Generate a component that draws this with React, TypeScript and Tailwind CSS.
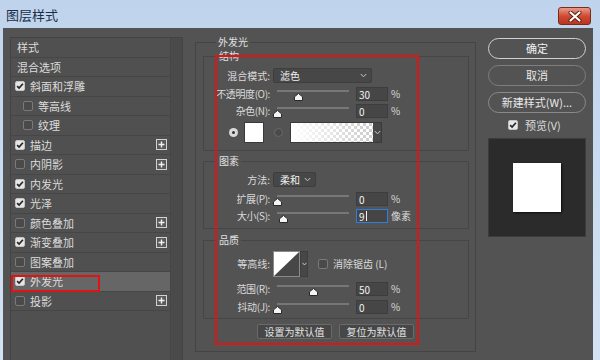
import React from "react";

function Check({ checked }: { checked: boolean }) {
  return checked ? (
    <span className="flex h-[10px] w-[10px] shrink-0 items-center justify-center rounded-[2px] border border-[#c4c4c4] bg-[#e6e6e6]">
      <svg width="8" height="8" viewBox="0 0 8 8">
        <path d="M1.1 4.1 L3.1 6 L6.9 1.7" fill="none" stroke="#262626" strokeWidth="1.7" />
      </svg>
    </span>
  ) : (
    <span className="block h-[10px] w-[10px] shrink-0 rounded-[2px] border border-[#7a7a7a] bg-[#4a4a4a]" />
  );
}

function Plus() {
  return (
    <span className="ml-auto mr-[3px] flex h-[11px] w-[11px] items-center justify-center border border-[#d2d2d2] bg-[#5a5a5a]">
      <svg width="7" height="7" viewBox="0 0 7 7">
        <path d="M3.5 0.5V6.5M0.5 3.5H6.5" stroke="#f2f2f2" strokeWidth="1.4" />
      </svg>
    </span>
  );
}

function Chevron() {
  return (
    <svg width="7" height="5" viewBox="0 0 7 5">
      <path d="M0.8 1 L3.5 3.8 L6.2 1" fill="none" stroke="#c8c8c8" strokeWidth="1" />
    </svg>
  );
}

type Row = { label: string; check?: boolean; indent?: boolean; plus?: boolean; selected?: boolean };

const rows: Row[] = [
  { label: "样式" },
  { label: "混合选项" },
  { label: "斜面和浮雕", check: true },
  { label: "等高线", check: false, indent: true },
  { label: "纹理", check: false, indent: true },
  { label: "描边", check: true, plus: true },
  { label: "内阴影", check: false, plus: true },
  { label: "内发光", check: true },
  { label: "光泽", check: true },
  { label: "颜色叠加", check: false, plus: true },
  { label: "渐变叠加", check: true, plus: true },
  { label: "图案叠加", check: false },
  { label: "外发光", check: true, selected: true },
  { label: "投影", check: false, plus: true },
];

function Slider({ pos }: { pos: number }) {
  return (
    <div className="relative ml-[7px] h-[14px] w-[72px] shrink-0">
      <div className="mt-[3px] h-[2px] w-full bg-[#777777]" />
      <svg className="absolute top-[6px]" style={{ left: pos - 4.5 }} width="9" height="8" viewBox="0 0 9 8">
        <path d="M4.5 0.5 L8.5 3.8 V7.5 H0.5 V3.8 Z" fill="#f4f4f4" stroke="#2a2a2a" strokeWidth="1" />
      </svg>
    </div>
  );
}

function Field({ value, active }: { value: string; active?: boolean }) {
  return (
    <div
      className={
        active
          ? "ml-[7px] flex h-[14px] w-[32px] shrink-0 items-center border border-[#2d7fe0] bg-[#454545] pl-[2px] text-[10px] text-[#f2f2f2]"
          : "ml-[7px] flex h-[14px] w-[32px] shrink-0 items-center border border-[#3d3d3d] bg-[#464646] pl-[2px] text-[10px] text-[#f2f2f2]"
      }
    >
      {value}
      {active && <span className="ml-[1px] h-[10px] w-[1px] bg-[#f2f2f2]" />}
    </div>
  );
}

function SliderRow({ label, pos, value, unit, active }: { label: string; pos: number; value: string; unit: string; active?: boolean }) {
  return (
    <div className="flex h-[14px] items-center">
      <div className="w-[66px] shrink-0 whitespace-nowrap text-right text-[10px] leading-[14px] tracking-[-0.4px] text-[#dadada]">{label}</div>
      <Slider pos={pos} />
      <Field value={value} active={active} />
      <span className="ml-[3px] text-[10px] leading-[14px] text-[#dadada]">{unit}</span>
    </div>
  );
}

function Legend({ children }: { children: React.ReactNode }) {
  return <legend className="ml-[13px] px-[2px] text-[10px] leading-[14px] text-[#e0e0e0]">{children}</legend>;
}

export default function App() {
  return (
    <div className="flex h-[360px] w-[600px] flex-col overflow-hidden bg-gradient-to-b from-[#bfd4ec] to-[#d4e3f4] font-['Noto_Sans_CJK_SC','Noto_Sans',sans-serif]">
      {/* title bar */}
      <div className="flex h-[28px] shrink-0 items-start justify-between pl-[6px] pr-[9px]">
        <span className="mt-[6px] text-[13px] leading-[18px] text-[#1c2f4a]">图层样式</span>
        <div className="mt-[7px] flex h-[18px] w-[33px] items-center justify-center rounded-[3px] border border-[#7d2a1c] bg-gradient-to-b from-[#e59a88] via-[#cf4b33] to-[#b8361f]">
          <svg width="14" height="11" viewBox="0 0 14 11">
            <path d="M2.5 1.5 L11.5 9.5 M11.5 1.5 L2.5 9.5" stroke="#5a1a10" strokeWidth="4" strokeLinecap="round" />
            <path d="M2.5 1.5 L11.5 9.5 M11.5 1.5 L2.5 9.5" stroke="#ffffff" strokeWidth="2.2" strokeLinecap="round" />
          </svg>
        </div>
      </div>

      {/* body */}
      <div className="relative ml-[3px] mr-[7px] flex flex-1 bg-[#535353] pl-[7px]">
        {/* left list */}
        <div className="mt-[9px] flex h-[324px] w-[173px] shrink-0 border border-[#434343] bg-[#505050]">
          <div className="relative w-[159px]">
            {rows.map((r, i) => (
              <div
                key={i}
                className={
                  r.selected
                    ? "flex h-[19.5px] items-center border-b border-[#464646] bg-[#666666]"
                    : "flex h-[19.5px] items-center border-b border-[#464646]"
                }
              >
                {r.check === undefined ? (
                  <span className="pl-[6px] text-[11px] leading-[14px] text-[#dcdcdc]">{r.label}</span>
                ) : (
                  <>
                    <span className={r.indent ? "flex pl-[12px]" : "flex pl-[4px]"}>
                      <Check checked={r.check} />
                    </span>
                    <span className="ml-[5px] text-[11px] leading-[14px] text-[#dcdcdc]">{r.label}</span>
                    {r.plus && <Plus />}
                  </>
                )}
              </div>
            ))}
            <div className="pointer-events-none absolute left-[0px] top-[237px] h-[17px] w-[89px] border-2 border-[#e01414]" />
          </div>
          <div className="w-[12px] border-l border-[#464646] bg-[#4a4a4a]" />
        </div>

        {/* middle */}
        <div className="ml-[12px] mt-[7px] w-[281px] shrink-0">
          <fieldset className="border border-[#444444] pb-[12px] pl-[7px] pr-[6px]">
            <Legend>外发光</Legend>
            {/* 结构 */}
            <fieldset className="border border-[#464646] pb-[7px]">
              <Legend>结构</Legend>
              <div className="mt-[5px] flex h-[15px] items-center">
                <div className="w-[66px] shrink-0 text-right text-[10px] leading-[14px] text-[#dadada]">混合模式:</div>
                <div className="ml-[3px] flex h-[15px] w-[99px] items-center justify-between rounded-[2px] border border-[#3e3e3e] bg-[#474747] pl-[6px] pr-[4px] text-[10px] text-[#f0f0f0]">
                  滤色
                  <Chevron />
                </div>
              </div>
              <div className="mt-[4px] flex flex-col gap-[3px]">
                <SliderRow label="不透明度(O):" pos={21.6} value="30" unit="%" />
                <SliderRow label="杂色(N):" pos={0} value="0" unit="%" />
              </div>
              <div className="mt-[4px] flex h-[21px] items-center pl-[25px]">
                <span className="flex h-[9px] w-[9px] items-center justify-center rounded-full bg-[#dadada]">
                  <span className="block h-[3px] w-[3px] rounded-full bg-[#333333]" />
                </span>
                <div className="ml-[6px] h-[21px] w-[20px] border border-[#3a3a3a] bg-white" />
                <span className="ml-[10px] block h-[9px] w-[9px] rounded-full border border-[#6a6a6a] bg-[#4a4a4a]" />
                <div className="ml-[7px] flex h-[21px] w-[92px] border border-[#3a3a3a]">
                  <svg width="82" height="19" viewBox="0 0 82 19">
                    <defs>
                      <pattern id="chk" width="6" height="6" patternUnits="userSpaceOnUse">
                        <rect width="6" height="6" fill="#ffffff" />
                        <rect width="3" height="3" fill="#cccccc" />
                        <rect x="3" y="3" width="3" height="3" fill="#cccccc" />
                      </pattern>
                      <linearGradient id="gw" x1="0" x2="1" y1="0" y2="0">
                        <stop offset="0" stopColor="#ffffff" stopOpacity="1" />
                        <stop offset="1" stopColor="#ffffff" stopOpacity="0" />
                      </linearGradient>
                    </defs>
                    <rect width="82" height="19" fill="url(#chk)" />
                    <rect width="82" height="19" fill="url(#gw)" />
                  </svg>
                  <div className="flex flex-1 items-center justify-center bg-[#474747]">
                    <Chevron />
                  </div>
                </div>
              </div>
            </fieldset>

            {/* 图素 */}
            <fieldset className="mt-[3px] border border-[#464646] pb-[5px]">
              <Legend>图素</Legend>
              <div className="mt-[4px] flex h-[15px] items-center">
                <div className="w-[66px] shrink-0 text-right text-[10px] leading-[14px] text-[#dadada]">方法:</div>
                <div className="ml-[3px] flex h-[15px] w-[43px] items-center justify-between rounded-[2px] border border-[#3e3e3e] bg-[#474747] pl-[6px] pr-[4px] text-[10px] text-[#f0f0f0]">
                  柔和
                  <Chevron />
                </div>
              </div>
              <div className="mt-[5px] flex flex-col gap-[3px]">
                <SliderRow label="扩展(P):" pos={0} value="0" unit="%" />
                <SliderRow label="大小(S):" pos={6} value="9" unit="像素" active />
              </div>
            </fieldset>

            {/* 品质 */}
            <fieldset className="mt-[4px] border border-[#464646] pb-[4px]">
              <Legend>品质</Legend>
              <div className="mt-[4px] flex h-[26px] items-center">
                <div className="w-[66px] shrink-0 text-right text-[10px] leading-[14px] text-[#dadada]">等高线:</div>
                <div className="ml-[3px] flex h-[26px]">
                  <svg width="27" height="26" viewBox="0 0 27 26">
                    <rect x="0.5" y="0.5" width="26" height="25" fill="#474747" stroke="#8a8a8a" />
                    <path d="M1 25 L26 1 L1 1 Z" fill="#ffffff" />
                  </svg>
                  <div className="flex w-[8px] items-center justify-center border border-[#3e3e3e] bg-[#474747]">
                    <svg width="5" height="4" viewBox="0 0 5 4">
                      <path d="M0.5 0.8 L2.5 3 L4.5 0.8" fill="none" stroke="#c8c8c8" strokeWidth="1" />
                    </svg>
                  </div>
                </div>
                <span className="ml-[10px] flex">
                  <Check checked={false} />
                </span>
                <span className="ml-[5px] text-[10px] leading-[14px] text-[#dadada]">消除锯齿 (L)</span>
              </div>
              <div className="mt-[5px] flex flex-col gap-[4px]">
                <SliderRow label="范围(R):" pos={36} value="50" unit="%" />
                <SliderRow label="抖动(J):" pos={0} value="0" unit="%" />
              </div>
            </fieldset>

            <div className="ml-[54px] mt-[5px] flex gap-[7px]">
              <div className="flex h-[15px] w-[75px] items-center justify-center rounded-[2px] border border-[#6a6a6a] bg-[#474747] text-[10px] text-[#e2e2e2]">
                设置为默认值
              </div>
              <div className="flex h-[15px] w-[75px] items-center justify-center rounded-[2px] border border-[#6a6a6a] bg-[#474747] text-[10px] text-[#e2e2e2]">
                复位为默认值
              </div>
            </div>
          </fieldset>
        </div>

        {/* right */}
        <div className="ml-[12px] mt-[10px] flex w-[98px] shrink-0 flex-col">
          <div className="flex h-[21px] items-center justify-center rounded-full border border-[#d0d0d0] text-[11px] text-[#f0f0f0]">确定</div>
          <div className="mt-[6px] flex h-[21px] items-center justify-center rounded-full border border-[#7e7e7e] text-[11px] text-[#e8e8e8]">取消</div>
          <div className="mt-[6px] flex h-[21px] items-center justify-center rounded-full border border-[#8a8a8a] text-[11px] text-[#e8e8e8]">新建样式(W)...</div>
          <div className="mt-[7px] flex h-[10px] items-center pl-[20px]">
            <Check checked={true} />
            <span className="ml-[7px] text-[11px] leading-[14px] text-[#dcdcdc]">预览(V)</span>
          </div>
          <div className="mt-[8px] flex h-[99px] items-center justify-center border border-[#3c3c3c] bg-[#2b2b2b]">
            <div className="h-[49px] w-[48px] bg-white shadow-[1px_1px_2px_rgba(0,0,0,0.7)]" />
          </div>
        </div>

        {/* red highlight */}
        <div className="pointer-events-none absolute left-[212px] top-[27px] h-[290px] w-[204px] border-2 border-[#e01414]" />
      </div>
    </div>
  );
}
